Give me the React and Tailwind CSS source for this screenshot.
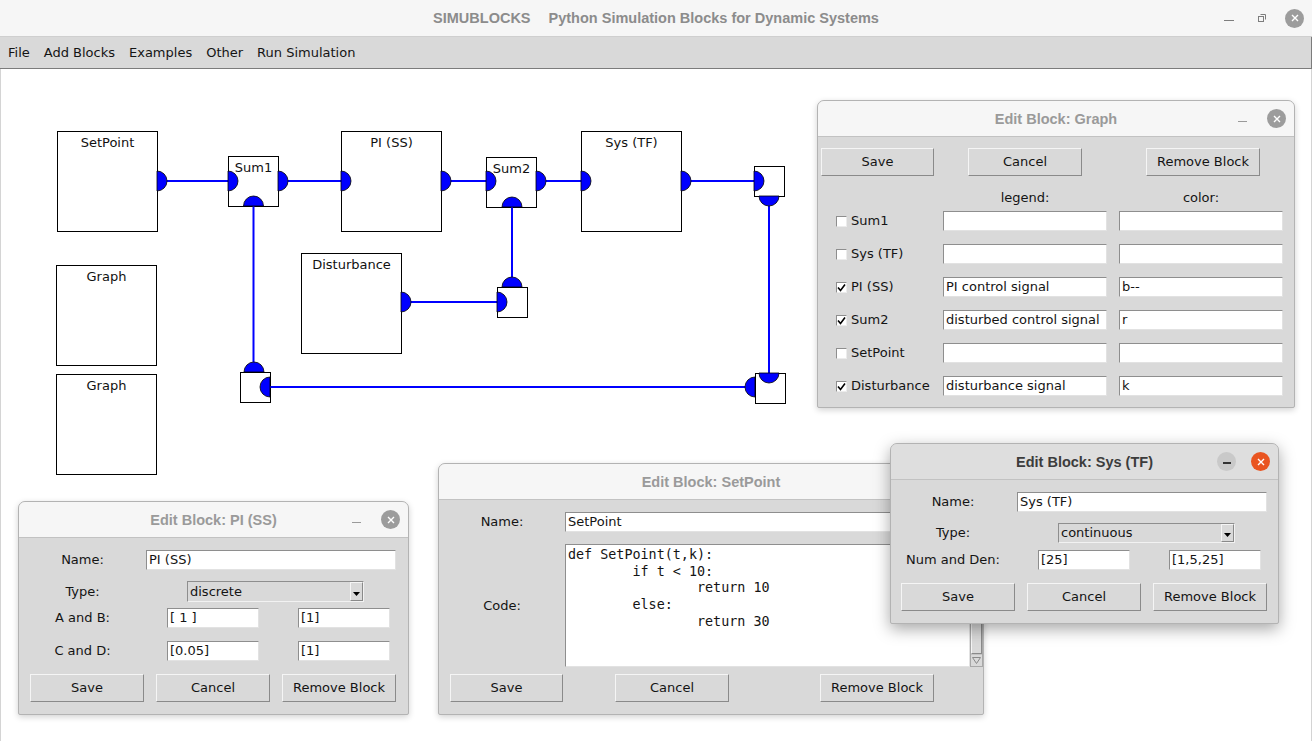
import React from "react";

const UI = "font-['DejaVu_Sans',sans-serif] text-[13px] text-[#141414]";
const TITLE = "font-['Liberation_Sans',Arial,sans-serif] font-bold text-[14.5px]";

function Entry({ value = "", className = "" }) {
  return (
    <div className={`h-[20px] bg-white border border-t-[#8e8e8e] border-l-[#8e8e8e] border-r-[#e2e2e2] border-b-[#e2e2e2] pl-[2px] flex items-center whitespace-nowrap overflow-hidden ${className}`}>
      {value}
    </div>
  );
}

function Btn({ children, className = "" }) {
  return (
    <div className={`h-[28px] flex items-center justify-center bg-[#d9d9d9] border border-t-[#f5f5f5] border-l-[#f5f5f5] border-r-[#8a8a8a] border-b-[#8a8a8a] ${className}`}>
      {children}
    </div>
  );
}

function Combo({ value, className = "" }) {
  return (
    <div className={`w-[177px] flex bg-[#d9d9d9] border border-t-[#8e8e8e] border-l-[#8e8e8e] border-r-[#f2f2f2] border-b-[#f2f2f2] ${className}`}>
      <div className="flex-1 pl-[2px] flex items-center">{value}</div>
      <div className="w-[13px] flex items-end justify-center pb-[3px] border border-t-[#f5f5f5] border-l-[#f5f5f5] border-r-[#8a8a8a] border-b-[#8a8a8a]">
        <svg width="7" height="5" viewBox="0 0 7 5">
          <path d="M0 0 H7 L3.5 4 Z" fill="#000" />
        </svg>
      </div>
    </div>
  );
}

function Check({ checked }) {
  return (
    <div className="w-[11px] h-[11px] bg-white border border-t-[#8e8e8e] border-l-[#8e8e8e] border-r-[#ececec] border-b-[#ececec] flex items-center justify-center">
      {checked && (
        <svg width="9" height="9" viewBox="0 0 9 9">
          <path d="M1 4.5 L3.5 7.5 L8 1.5" fill="none" stroke="#000" strokeWidth="1.6" />
        </svg>
      )}
    </div>
  );
}

function CloseDot({ active }) {
  return (
    <div className={`w-[19px] h-[19px] rounded-full flex items-center justify-center ${active ? "bg-[#e95420]" : "bg-[#9c9c9c]"}`}>
      <svg width="8" height="8" viewBox="0 0 8 8">
        <path d="M1 1 L7 7 M7 1 L1 7" stroke="#fff" strokeWidth="1.4" />
      </svg>
    </div>
  );
}

function MinDot({ active }) {
  if (active)
    return (
      <div className="w-[19px] h-[19px] rounded-full bg-[#c9c9c9] flex items-center justify-center">
        <div className="w-[8px] h-[1.5px] bg-[#333] mt-[3px]" />
      </div>
    );
  return (
    <div className="w-[19px] flex justify-center">
      <div className="w-[9px] h-[1px] bg-[#9a9a9a] mt-[5px]" />
    </div>
  );
}

function Win({ title, active, className = "", children }) {
  return (
    <div className={`absolute flex flex-col bg-[#d9d9d9] border border-[#b3b3b3] rounded-t-[7px] rounded-b-[2px] ${UI} ${active ? "shadow-[0_5px_16px_rgba(0,0,0,0.35)]" : "shadow-[0_2px_6px_rgba(0,0,0,0.18)]"} ${className}`}>
      <div className={`h-[36px] shrink-0 grid grid-cols-[1fr_auto_1fr] items-center border-b border-b-[#c2c2c2] rounded-t-[6px] ${active ? "bg-[#dedede]" : "bg-[#f6f6f6]"}`}>
        <div />
        <div className={`${TITLE} mt-[2px] ${active ? "text-[#3c3c3c]" : "text-[#9a9a9a]"}`}>{title}</div>
        <div className="flex justify-end items-center gap-[15px] pr-[8px]">
          <MinDot active={active} />
          <CloseDot active={active} />
        </div>
      </div>
      {children}
    </div>
  );
}

function Block({ label, className = "" }) {
  return (
    <div className={`absolute bg-white border border-black flex justify-center pt-[3px] leading-[16px] text-[13px] text-[#111] ${className}`}>
      {label}
    </div>
  );
}

const wires = [
  "M167 181 H228", "M288 181 H341", "M451 181 H486", "M546 181 H581", "M691 181 H754",
  "M253.5 206 V362", "M512 207 V277", "M769 206 V373",
  "M411 302 H497", "M270 387 H745",
];
const right = [[157, 181], [228, 181], [278, 181], [341, 181], [441, 181], [486, 181], [536, 181], [581, 181], [681, 181], [754, 181], [401, 302], [497, 302]];
const left = [[270, 387], [755, 387]];
const up = [[253.5, 206], [512, 207], [512, 287], [254, 372]];
const down = [[769, 196], [769, 373]];

function Diagram() {
  return (
    <svg className="absolute left-0 top-0" width="1310" height="672" viewBox="1 69 1310 672">
      {wires.map((d) => (
        <path key={d} d={d} stroke="#0000ff" strokeWidth="2" fill="none" />
      ))}
      {right.map(([x, y]) => (
        <path key={`r${x}${y}`} d={`M${x} ${y - 10} A10 10 0 0 1 ${x} ${y + 10} Z`} fill="#0000ff" stroke="#000" strokeWidth="0.8" />
      ))}
      {left.map(([x, y]) => (
        <path key={`l${x}${y}`} d={`M${x} ${y - 10} A10 10 0 0 0 ${x} ${y + 10} Z`} fill="#0000ff" stroke="#000" strokeWidth="0.8" />
      ))}
      {up.map(([x, y]) => (
        <path key={`u${x}${y}`} d={`M${x - 10} ${y} A10 10 0 0 1 ${x + 10} ${y} Z`} fill="#0000ff" stroke="#000" strokeWidth="0.8" />
      ))}
      {down.map(([x, y]) => (
        <path key={`d${x}${y}`} d={`M${x - 10} ${y} A10 10 0 0 0 ${x + 10} ${y} Z`} fill="#0000ff" stroke="#000" strokeWidth="0.8" />
      ))}
    </svg>
  );
}

const graphRows = [
  { name: "Sum1", on: false, legend: "", color: "" },
  { name: "Sys (TF)", on: false, legend: "", color: "" },
  { name: "PI (SS)", on: true, legend: "PI control signal", color: "b--" },
  { name: "Sum2", on: true, legend: "disturbed control signal", color: "r" },
  { name: "SetPoint", on: false, legend: "", color: "" },
  { name: "Disturbance", on: true, legend: "disturbance signal", color: "k" },
];

const code = `def SetPoint(t,k):
        if t < 10:
                return 10
        else:
                return 30`;

export default function App() {
  return (
    <div className={`relative w-[1312px] h-[741px] overflow-hidden bg-white flex flex-col ${UI}`}>
      {/* main window title */}
      <div className="h-[37px] shrink-0 grid grid-cols-[1fr_auto_1fr] items-center bg-[#f6f6f6] border-b border-b-[#cfcfcf]">
        <div />
        <div className={`${TITLE} mt-[2px] text-[#8c8c8c] flex gap-[18px]`}>
          <span>SIMUBLOCKS</span>
          <span>Python Simulation Blocks for Dynamic Systems</span>
        </div>
        <div className="flex justify-end items-center gap-[14px] pr-[8px]">
          <div className="w-[19px] flex justify-center">
            <div className="w-[10px] h-[1px] bg-[#7d7d7d] mt-[5px]" />
          </div>
          <div className="w-[19px] flex justify-center">
            <svg width="10" height="10" viewBox="0 0 10 10">
              <rect x="1.5" y="3.5" width="5" height="5" fill="none" stroke="#7d7d7d" />
              <path d="M3.5 1.5 H8.5 V6.5" fill="none" stroke="#7d7d7d" />
            </svg>
          </div>
          <CloseDot />
        </div>
      </div>

      {/* menu */}
      <div className="h-[32px] shrink-0 flex items-center pl-[1px] bg-[#d9d9d9] border-b border-r border-b-[#7c7c7c] border-r-[#7c7c7c]">
        {["File", "Add Blocks", "Examples", "Other", "Run Simulation"].map((m) => (
          <span key={m} className="px-[7px]">{m}</span>
        ))}
      </div>

      {/* canvas */}
      <div className="relative flex-1 bg-white border-l border-r border-[#d4d4d4]">
        <Block label="SetPoint" className="left-[56px] top-[62px] w-[101px] h-[101px]" />
        <Block label="Sum1" className="left-[227px] top-[87px] w-[51px] h-[51px]" />
        <Block label="PI (SS)" className="left-[340px] top-[62px] w-[101px] h-[101px]" />
        <Block label="Sum2" className="left-[485px] top-[88px] w-[51px] h-[51px]" />
        <Block label="Sys (TF)" className="left-[580px] top-[62px] w-[101px] h-[101px]" />
        <Block label="" className="left-[753px] top-[97px] w-[31px] h-[31px]" />
        <Block label="Disturbance" className="left-[300px] top-[184px] w-[101px] h-[101px]" />
        <Block label="" className="left-[496px] top-[218px] w-[31px] h-[31px]" />
        <Block label="Graph" className="left-[55px] top-[196px] w-[101px] h-[101px]" />
        <Block label="Graph" className="left-[55px] top-[305px] w-[101px] h-[101px]" />
        <Block label="" className="left-[239px] top-[303px] w-[31px] h-[31px]" />
        <Block label="" className="left-[754px] top-[304px] w-[31px] h-[31px]" />
        <Diagram />
      </div>

      {/* Graph dialog */}
      <Win title="Edit Block: Graph" className="left-[817px] top-[100px] w-[478px] h-[308px]">
        <div className="flex mt-[11px]">
          <Btn className="ml-[3px] w-[113px]">Save</Btn>
          <Btn className="ml-[34px] w-[114px]">Cancel</Btn>
          <Btn className="ml-[64px] w-[114px]">Remove Block</Btn>
        </div>
        <div className="flex h-[20px] items-center mt-[12px]">
          <div className="w-[125px]" />
          <div className="w-[164px] text-center">legend:</div>
          <div className="ml-[12px] w-[164px] text-center">color:</div>
        </div>
        <div className="flex flex-col gap-[13px] mt-[3px]">
          {graphRows.map((r) => (
            <div key={r.name} className="flex items-center h-[20px]">
              <div className="w-[125px] flex items-center pl-[18px] gap-[4px]">
                <Check checked={r.on} />
                <span>{r.name}</span>
              </div>
              <Entry value={r.legend} className="w-[164px]" />
              <Entry value={r.color} className="ml-[12px] w-[164px]" />
            </div>
          ))}
        </div>
      </Win>

      {/* PI dialog */}
      <Win title="Edit Block: PI (SS)" className="left-[18px] top-[501px] w-[391px] h-[214px]">
        <div className="flex items-center mt-[12px]">
          <div className="w-[127px] text-center">Name:</div>
          <Entry value="PI (SS)" className="w-[250px]" />
        </div>
        <div className="flex items-stretch h-[21px] mt-[11px]">
          <div className="w-[127px] flex items-center justify-center">Type:</div>
          <Combo value="discrete" className="ml-[41px]" />
        </div>
        <div className="flex items-center mt-[6px]">
          <div className="w-[127px] text-center">A and B:</div>
          <Entry value="[ 1 ]" className="ml-[21px] w-[92px]" />
          <Entry value="[1]" className="ml-[39px] w-[92px]" />
        </div>
        <div className="flex items-center mt-[13px]">
          <div className="w-[127px] text-center">C and D:</div>
          <Entry value="[0.05]" className="ml-[21px] w-[92px]" />
          <Entry value="[1]" className="ml-[39px] w-[92px]" />
        </div>
        <div className="flex gap-[12px] pl-[11px] mt-[13px]">
          <Btn className="w-[114px]">Save</Btn>
          <Btn className="w-[114px]">Cancel</Btn>
          <Btn className="w-[114px]">Remove Block</Btn>
        </div>
      </Win>

      {/* SetPoint dialog */}
      <Win title="Edit Block: SetPoint" className="left-[438px] top-[463px] w-[546px] h-[252px]">
        <div className="flex items-center mt-[12px]">
          <div className="w-[126px] text-center">Name:</div>
          <Entry value="SetPoint" className="flex-1" />
        </div>
        <div className="flex h-[123px] mt-[12px]">
          <div className="w-[126px] flex items-center justify-center">Code:</div>
          <div className="flex-1 bg-white border border-t-[#8e8e8e] border-l-[#8e8e8e] border-r-[#e2e2e2] border-b-[#e2e2e2] pl-[2px] pt-[2px] font-['DejaVu_Sans_Mono',monospace] text-[13.4px] leading-[16.7px] whitespace-pre">
            {code}
          </div>
          <div className="w-[13px] flex flex-col bg-[#c4c4c4] border border-[#a8a8a8]">
            <div className="h-[11px] border border-t-[#f5f5f5] border-l-[#f5f5f5] border-r-[#8a8a8a] border-b-[#8a8a8a] bg-[#d9d9d9]" />
            <div className="flex-1 mb-[1px] border border-t-[#f5f5f5] border-l-[#f5f5f5] border-r-[#8a8a8a] border-b-[#8a8a8a] bg-[#d9d9d9]" />
            <div className="h-[11px] flex items-center justify-center bg-[#d9d9d9]">
              <svg width="9" height="7" viewBox="0 0 9 7">
                <path d="M0.5 0.5 H8.5 L4.5 6.5 Z" fill="none" stroke="#8a8a8a" />
              </svg>
            </div>
          </div>
        </div>
        <div className="flex mt-[7px]">
          <Btn className="ml-[11px] w-[113px]">Save</Btn>
          <Btn className="ml-[52px] w-[114px]">Cancel</Btn>
          <Btn className="ml-[91px] w-[114px]">Remove Block</Btn>
        </div>
      </Win>

      {/* Sys dialog (active) */}
      <Win title="Edit Block: Sys (TF)" active className="left-[890px] top-[443px] w-[389px] h-[181px]">
        <div className="flex items-center mt-[12px]">
          <div className="w-[126px] pr-[2px] text-center">Name:</div>
          <Entry value="Sys (TF)" className="w-[250px]" />
        </div>
        <div className="flex items-stretch h-[20px] mt-[11px]">
          <div className="w-[126px] pr-[2px] flex items-center justify-center">Type:</div>
          <Combo value="continuous" className="ml-[41px]" />
        </div>
        <div className="flex items-center mt-[7px]">
          <div className="w-[126px] pr-[2px] text-center">Num and Den:</div>
          <Entry value="[25]" className="ml-[21px] w-[92px]" />
          <Entry value="[1,5,25]" className="ml-[39px] w-[92px]" />
        </div>
        <div className="flex gap-[12px] pl-[10px] mt-[13px]">
          <Btn className="w-[114px]">Save</Btn>
          <Btn className="w-[114px]">Cancel</Btn>
          <Btn className="w-[114px]">Remove Block</Btn>
        </div>
      </Win>
    </div>
  );
}
